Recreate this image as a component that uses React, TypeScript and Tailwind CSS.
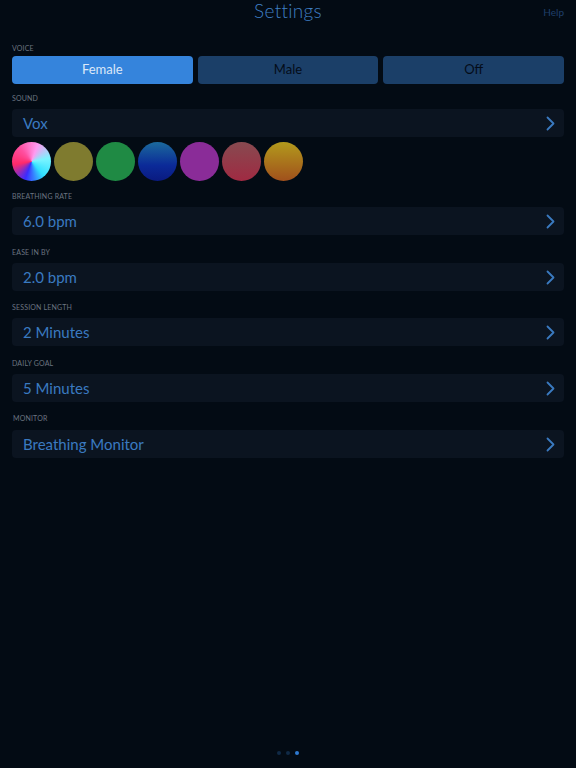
import React, { useState } from "react";

const rows = [
  { label: "BREATHING RATE", value: "6.0 bpm", gap: "mt-[10px]", inner: "mt-[6px]" },
  { label: "EASE IN BY", value: "2.0 bpm", gap: "mt-[12px]", inner: "mt-[6px]" },
  { label: "SESSION LENGTH", value: "2 Minutes", gap: "mt-[11px]", inner: "mt-[6px]" },
  { label: "DAILY GOAL", value: "5 Minutes", gap: "mt-[12px]", inner: "mt-[6px]" },
  { label: "MONITOR", value: "Breathing Monitor", gap: "mt-[11px] pl-[1px]", inner: "mt-[7px]" },
];

const swatches = [
  "bg-[conic-gradient(from_200deg,#3a2cff,#ff2a6a,#ff4fa0,#ff9af0,#7af4ff,#30e0ff,#3a2cff)]",
  "bg-[#7f7b2f]",
  "bg-[#1f8a44]",
  "bg-[linear-gradient(to_bottom,#1b6a9c,#0b2a98_60%,#0a1a80)]",
  "bg-[#8a2c98]",
  "bg-[linear-gradient(to_bottom,#874a50,#a02a42)]",
  "bg-[linear-gradient(to_bottom,#b39a1c,#a0501c)]",
];

const Chevron = () => (
  <svg width="9" height="15" viewBox="0 0 9 15" fill="none">
    <path
      d="M1.5 1.5 L7.5 7.5 L1.5 13.5"
      stroke="#3a7ac0"
      strokeWidth="1.8"
      strokeLinecap="round"
      strokeLinejoin="round"
    />
  </svg>
);

const Label = ({ text }: { text: string }) => (
  <div className="h-[10px] text-[7px] leading-[10px] text-[#6b7480] tracking-wide">
    {text}
  </div>
);

const Row = ({ value }: { value: string }) => (
  <div className="h-[28px] rounded-[4px] bg-[#0b1420] flex items-center justify-between pl-[11px] pr-[9px]">
    <span className="text-[15px] text-[#3a7ac0]">{value}</span>
    <Chevron />
  </div>
);

export default function App() {
  const [voice, setVoice] = useState("Female");

  return (
    <div className="w-[576px] h-[768px] bg-[#030b14] font-['Lato',sans-serif] px-3 flex flex-col relative">
      {/* header */}
      <div className="h-[22px] relative flex justify-center">
        <span className="text-[19px] leading-[22px] font-light text-[#3f7fc4] tracking-[0.3px]">
          Settings
        </span>
        <span className="absolute right-0 top-[6px] text-[10px] leading-[12px] text-[#1f3f6a]">
          Help
        </span>
      </div>

      {/* voice */}
      <div className="mt-[21px]">
        <Label text="VOICE" />
      </div>
      <div className="mt-[3px] grid grid-cols-3 gap-[5px]">
        {["Female", "Male", "Off"].map((v) => (
          <button
            key={v}
            onClick={() => setVoice(v)}
            className={`h-[28px] rounded-[4px] text-[13px] ${
              voice === v
                ? "bg-[#3584dc] text-[#dce8f8]"
                : "bg-[#1b3f68] text-[#040c18]"
            }`}
          >
            {v}
          </button>
        ))}
      </div>

      {/* sound */}
      <div className="mt-[9px]">
        <Label text="SOUND" />
      </div>
      <div className="mt-[6px]">
        <Row value="Vox" />
      </div>
      <div className="mt-[5px] flex gap-[3px]">
        {swatches.map((s, i) => (
          <div key={i} className={`w-[39px] h-[39px] rounded-full ${s}`} />
        ))}
      </div>

      {rows.map((r) => (
        <div key={r.label}>
          <div className={r.gap}>
            <Label text={r.label} />
          </div>
          <div className={r.inner}>
            <Row value={r.value} />
          </div>
        </div>
      ))}

      {/* page dots */}
      <div className="mt-auto mb-[13px] flex justify-center items-center gap-[5px]">
        <div className="w-[4px] h-[4px] rounded-full bg-[#102a46]" />
        <div className="w-[4px] h-[4px] rounded-full bg-[#102a46]" />
        <div className="w-[4px] h-[4px] rounded-full bg-[#2f7ad0]" />
      </div>
    </div>
  );
}
